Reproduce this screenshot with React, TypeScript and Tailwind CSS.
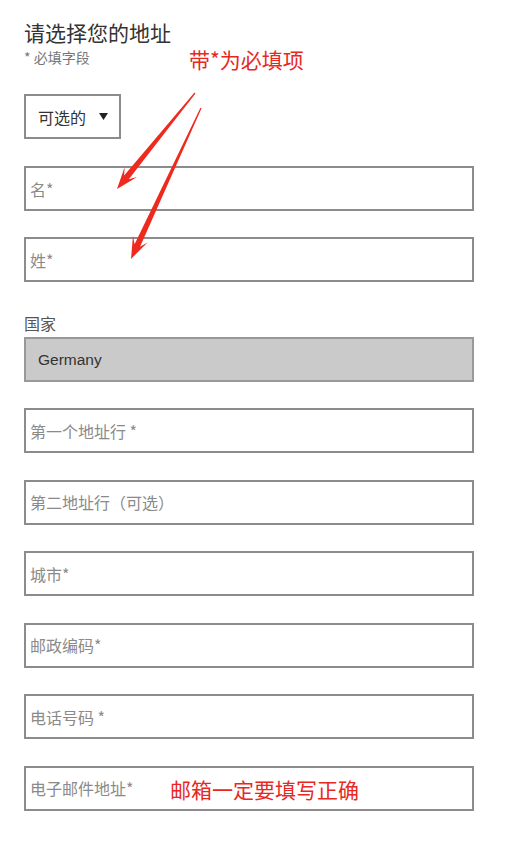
import React from 'react';

/* 地址表单 — 带红色标注的截图 */

const FONT = { fontFamily: '"Noto Sans CJK SC", "Noto Sans", "Liberation Sans", sans-serif' };

type Pt = [number, number];

function arrowPoints(tail: Pt, tip: Pt) {
    const dx = tip[0] - tail[0];
    const dy = tip[1] - tail[1];
    const len = Math.hypot(dx, dy);
    const u: Pt = [dx / len, dy / len];
    const n: Pt = [-u[1], u[0]];
    const at = (d: number, w: number): Pt => [tip[0] - u[0] * d + n[0] * w, tip[1] - u[1] * d + n[1] * w];
    const pts: Pt[] = [
        [tail[0] + n[0] * 0.6, tail[1] + n[1] * 0.6],
        at(15, 3),
        at(22, 8),
        tip,
        at(22, -8),
        at(15, -3),
        [tail[0] - n[0] * 0.6, tail[1] - n[1] * 0.6],
    ];
    return pts.map((p) => p.join(',')).join(' ');
}

function Field({ placeholder, children }: { placeholder: string; children?: React.ReactNode }) {
    return (
        <div className="relative">
            <input
                type="text"
                placeholder={placeholder}
                className="block w-full h-[45px] border-2 border-[#8c8c8c] bg-white pl-[4px] text-[16px] text-[#333] placeholder:text-[#8a8a8a] outline-none"
                style={FONT}
            />
            {children}
        </div>
    );
}

export default function App() {
    return (
        <div className="relative w-[532px] h-[850px] bg-white pl-[24px] pr-[58px]" style={FONT}>
            <h1 className="pt-[18px] text-[21px] leading-[28px] text-[#333] font-normal">请选择您的地址</h1>
            <p className="mt-[2px] text-[14px] leading-[18px] text-[#777]">* 必填字段</p>

            <div className="mt-[28px] flex items-center w-[97px] h-[45px] border-2 border-[#8c8c8c] pl-[12px]">
                <span className="text-[16px] text-[#333]">可选的</span>
                <svg className="ml-[13px]" width="9" height="8" viewBox="0 0 9 8">
                    <polygon points="0,0 9,0 4.5,7" fill="#222" />
                </svg>
            </div>

            <div className="mt-[27px] flex flex-col gap-[26px]">
                <Field placeholder="名*" />
                <Field placeholder="姓*" />
            </div>

            <div className="mt-[31px]">
                <p className="text-[16px] leading-[20px] text-[#555]">国家</p>
                <div className="mt-[4px] flex items-center h-[45px] border-2 border-[#999] bg-[#cacaca] pl-[12px]">
                    <span className="text-[15.5px] text-[#333]" style={{ fontFamily: '"Liberation Sans", Arial, sans-serif' }}>
                        Germany
                    </span>
                </div>
            </div>

            <div className="mt-[26px] flex flex-col gap-[26.6px]">
                <Field placeholder="第一个地址行 *" />
                <Field placeholder="第二地址行（可选）" />
                <Field placeholder="城市*" />
                <Field placeholder="邮政编码*" />
                <Field placeholder="电话号码 *" />
                <Field placeholder="电子邮件地址*">
                    <span className="absolute left-[146px] top-[9px] text-[21px] leading-[28px] text-[#e8281f] pointer-events-none">
                        邮箱一定要填写正确
                    </span>
                </Field>
            </div>

            {/* 标注 */}
            <span className="absolute left-[189px] top-[45px] text-[21px] leading-[28px] text-[#e8281f]">带*为必填项</span>
            <svg className="absolute inset-0 pointer-events-none" width="532" height="850">
                <polygon points={arrowPoints([195, 93], [117, 189])} fill="#ee2a1f" />
                <polygon points={arrowPoints([201, 108], [131, 259])} fill="#ee2a1f" />
            </svg>
        </div>
    );
}
